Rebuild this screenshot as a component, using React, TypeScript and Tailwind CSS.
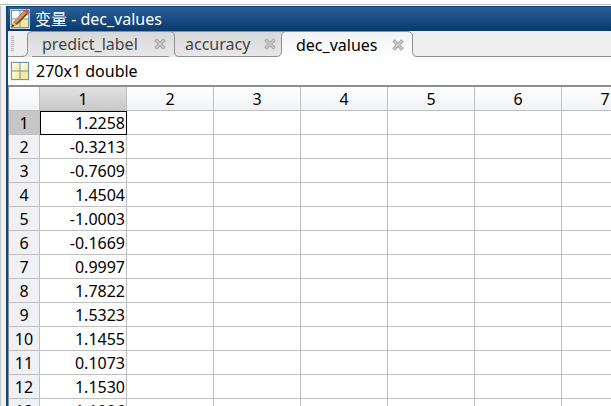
import clsx from 'clsx';
import { useState } from 'react';

const COLUMNS = [1, 2, 3, 4, 5, 6, 7];

const VALUES = [
    '1.2258',
    '-0.3213',
    '-0.7609',
    '1.4504',
    '-1.0003',
    '-0.1669',
    '0.9997',
    '1.7822',
    '1.5323',
    '1.1455',
    '0.1073',
    '1.1530',
    '1.1096',
];

const TABS = [
    { name: 'predict_label', size: 'w-[137px] pl-[10px] pr-[3px]' },
    { name: 'accuracy', size: 'w-[97px] pl-[6px]' },
    { name: 'dec_values', size: 'w-[121px] pl-[10px] pr-[3px]' },
];

const GridIcon = ({ pencil = false }: { pencil?: boolean }) => (
    <svg viewBox="0 0 20 20" className="h-5 w-5 shrink-0" aria-hidden="true">
        <defs>
            <linearGradient id="cell" x1="0" y1="0" x2="1" y2="1">
                <stop offset="0" stopColor="#fffef0" />
                <stop offset="1" stopColor="#f7e78e" />
            </linearGradient>
        </defs>
        <rect x="0" y="0" width="20" height="20" fill={pencil ? '#c9d3da' : '#eef0f2'} />
        <rect x="1" y="1" width="18" height="18" fill="#7393ad" />
        <rect x="2" y="2" width="7.5" height="7.5" fill={pencil ? '#fdfdfa' : 'url(#cell)'} />
        <rect x="10.5" y="2" width="7.5" height="7.5" fill={pencil ? '#fdfdfa' : 'url(#cell)'} />
        <rect x="2" y="10.5" width="7.5" height="7.5" fill="url(#cell)" />
        <rect x="10.5" y="10.5" width="7.5" height="7.5" fill="#f9ea96" />
        {pencil && (
            <>
                <path d="M1.5 18 L3.5 13 L14 1.5 L18 5 L7 16 Z" fill="#7d4a26" />
                <path d="M3.8 13 L14 2 L16.4 4 L6 14.6 Z" fill="#d39a5f" />
                <path d="M14 1.8 L15.6 0.2 Q19.6 0 19.6 3.4 L18 5.2 Z" fill="#bf5563" />
                <path d="M1.5 18 L3.5 13 L7 16 Z" fill="#dcbb92" />
                <path d="M1.5 18 L2.5 15.6 L4.4 17 Z" fill="#222" />
            </>
        )}
    </svg>
);

const CloseIcon = () => (
    <svg viewBox="0 0 12 12" className="h-3 w-3" aria-hidden="true">
        <path d="M1.5 1.5 L10.5 10.5 M10.5 1.5 L1.5 10.5" stroke="#a6a6a6" strokeWidth="3.6" />
        <path d="M2 2 L10 10 M10 2 L2 10" stroke="#cfcfcf" strokeWidth="1.4" />
    </svg>
);

type Tone = 'bar' | 'idle' | 'active';

const FILLS: Record<Tone, string> = {
    bar: '#efefef',
    idle: 'url(#idle)',
    active: 'url(#active)',
};

// Curved line between two neighbouring tabs; it rises into the tab in front on its right
const TabEdge = ({ left, right, rising }: { left: Tone; right: Tone; rising: boolean }) => {
    const line = rising ? 'M0 25.5 Q5.5 25.5 5.5 20.5 V5.5 Q5.5 0.5 10 0.5' : 'M0 0.5 Q5.5 0.5 5.5 5.5 V20.5 Q5.5 25.5 10 25.5';
    const front = rising ? `${line} V26 H0 Z` : `${line} V26 H0 Z`;

    return (
        <svg viewBox="0 0 10 26" className="h-[26px] w-[10px] shrink-0" aria-hidden="true">
            <defs>
                <linearGradient id="idle" x1="0" y1="0" x2="0" y2="26" gradientUnits="userSpaceOnUse">
                    <stop offset="0" stopColor="#d8d8d8" />
                    <stop offset="1" stopColor="#e8e8e8" />
                </linearGradient>
                <linearGradient id="active" x1="0" y1="0" x2="0" y2="26" gradientUnits="userSpaceOnUse">
                    <stop offset="0" stopColor="#f1f2f5" />
                    <stop offset="1" stopColor="#ffffff" />
                </linearGradient>
            </defs>
            <rect width="10" height="26" fill={FILLS[rising ? left : right]} />
            <path d={front} fill={FILLS[rising ? right : left]} />
            {rising && left === 'idle' && <path d="M0 0.5 H10" stroke="#8f8f8f" />}
            {!rising && right === 'idle' && <path d="M0 0.5 H10" stroke="#8f8f8f" />}
            <path d={line} fill="none" stroke="#8f8f8f" />
        </svg>
    );
};

const App = () => {
    const [active, setActive] = useState('dec_values');
    const toneOf = (index: number): Tone => (TABS[index] ? (TABS[index].name === active ? 'active' : 'idle') : 'bar');

    return (
        <div className="flex h-screen flex-col overflow-hidden bg-white font-['Noto_Sans','Noto_Sans_CJK_SC',sans-serif] text-base text-black">
            <div className="h-[6px] shrink-0">
                <div className="h-[5px] border-b border-[#bdbdbd]" />
            </div>
            <div className="flex min-h-0 flex-1">
                <div className="w-[6px] shrink-0 border-l border-[#c4c4c4] bg-[#f0f0f0]" />
                <main className="flex min-w-0 flex-1 flex-col border-l-2 border-[#11457e]">
                    <header className="flex h-[25px] shrink-0 items-center gap-[5px] border-t border-[#0d427b] bg-gradient-to-b from-[#2a5f98] to-[#093a6d] pl-[2px] text-white">
                        <GridIcon pencil />
                        <h1 className="text-base leading-6 whitespace-nowrap">变量 - dec_values</h1>
                    </header>

                    <nav className="flex h-[26px] shrink-0">
                        <div className="flex w-[14px] shrink-0 flex-col gap-px border-b border-[#8f8f8f] bg-[#efefef] pt-[5px] pl-[3px]">
                            {[0, 1, 2, 3, 4, 5, 6, 7].map((dot) => (
                                <span key={dot} className="h-px w-[3px] shrink-0 bg-[#b5b5b5]" />
                            ))}
                        </div>
                        <TabEdge left="bar" right={toneOf(0)} rising />
                        {TABS.map(({ name, size }, index) => (
                            <div key={name} className="flex shrink-0">
                                <div
                                    className={clsx(
                                        'flex shrink-0 items-center justify-between border-t border-[#8f8f8f] bg-gradient-to-b',
                                        size,
                                        active === name
                                            ? 'from-[#f1f2f5] to-white'
                                            : 'border-b from-[#d8d8d8] to-[#e8e8e8] text-[#444]',
                                    )}
                                >
                                    <button type="button" className="leading-6" onClick={() => setActive(name)}>
                                        {name}
                                    </button>
                                    <button type="button" aria-label={`Close ${name}`}>
                                        <CloseIcon />
                                    </button>
                                </div>
                                <TabEdge left={toneOf(index)} right={toneOf(index + 1)} rising={toneOf(index + 1) === 'active'} />
                            </div>
                        ))}
                        <div className="flex-1 border-b border-[#8f8f8f] bg-[#efefef]" />
                    </nav>

                    <div className="flex h-[28px] shrink-0 items-center gap-[6px] pl-[2px]">
                        <GridIcon />
                        <span className="leading-6">270x1 double</span>
                    </div>

                    <div className="min-h-0 flex-1 overflow-hidden border-t-2 border-l border-[#8b8f92]">
                        <table className="w-[640px] table-fixed border-separate border-spacing-0 leading-[22px]">
                            <colgroup>
                                <col className="w-[31px]" />
                                {COLUMNS.map((column) => (
                                    <col key={column} className="w-[87px]" />
                                ))}
                            </colgroup>
                            <thead>
                                <tr className="h-6">
                                    <td className="border-r border-b border-[#bfbfbf] bg-gradient-to-b from-white to-[#f1f2f5] p-0" />
                                    {COLUMNS.map((column) => (
                                        <th
                                            key={column}
                                            scope="col"
                                            className={clsx(
                                                'border-r border-b border-[#bfbfbf] bg-gradient-to-b p-0 pt-px font-normal',
                                                column === 1 ? 'from-[#e2e2e2] to-[#c8c8c8]' : 'from-white to-[#f1f2f5]',
                                            )}
                                        >
                                            {column}
                                        </th>
                                    ))}
                                </tr>
                            </thead>
                            <tbody>
                                {VALUES.map((value, index) => (
                                    <tr key={index} className="h-6">
                                        <th
                                            scope="row"
                                            className={clsx(
                                                'border-r border-b border-[#bfbfbf] p-0 pt-px font-normal',
                                                index === 0 ? 'bg-[#c6c6c6]' : 'bg-[#f0f1f4]',
                                            )}
                                        >
                                            {index + 1}
                                        </th>
                                        {COLUMNS.map((column) => (
                                            <td
                                                key={column}
                                                className={clsx(
                                                    'border-r border-b border-[#bfbfbf] p-0 text-right',
                                                    column === 1 && 'pt-px pr-px',
                                                    column === 1 && index === 0 && 'outline -outline-offset-1 outline-black',
                                                )}
                                            >
                                                {column === 1 && value}
                                            </td>
                                        ))}
                                    </tr>
                                ))}
                            </tbody>
                        </table>
                    </div>
                </main>
            </div>
        </div>
    );
};

export default App;
